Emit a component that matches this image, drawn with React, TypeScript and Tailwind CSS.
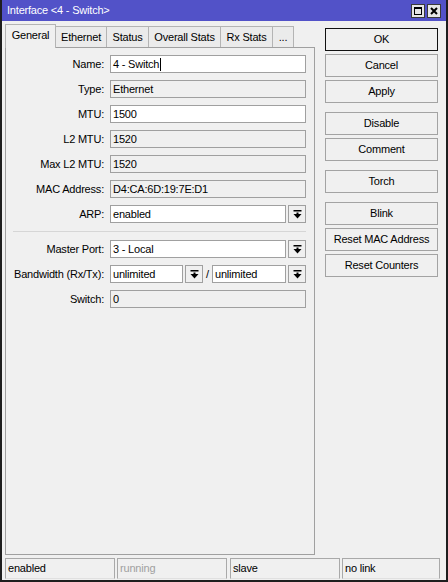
import React from "react";

const tabs = [
  { label: "General", w: "w-[51px]", active: true },
  { label: "Ethernet", w: "w-[52px]" },
  { label: "Status", w: "w-[43px]" },
  { label: "Overall Stats", w: "w-[73px]" },
  { label: "Rx Stats", w: "w-[53px]" },
  { label: "...", w: "w-[22px]" },
];

const buttonGroups = [
  ["OK", "Cancel", "Apply"],
  ["Disable", "Comment"],
  ["Torch"],
  ["Blink", "Reset MAC Address", "Reset Counters"],
];

const statusCells = [
  { text: "enabled", w: "w-[110px]", gap: "" },
  { text: "running", w: "w-[110px]", gap: "ml-[2px]", dim: true },
  { text: "slave", w: "w-[110px]", gap: "ml-[3px]" },
  { text: "no link", w: "w-[98px]", gap: "ml-[2px]" },
];

function DropIcon() {
  return (
    <svg width="9" height="9" viewBox="0 0 9 9">
      <rect x="0.5" y="0" width="8" height="1.5" fill="#000" />
      <rect x="3.5" y="2.5" width="2" height="1.5" fill="#000" />
      <polygon points="0.5,4 8.5,4 4.5,8.5" fill="#000" />
    </svg>
  );
}

function DropBtn() {
  return (
    <div className="w-[18px] h-[18px] shrink-0 border border-[#a0a0a0] bg-[#f0f0f0] flex items-center justify-center">
      <DropIcon />
    </div>
  );
}

function Field({
  value,
  editable,
  caret,
  className = "w-full",
}: {
  value: string;
  editable?: boolean;
  caret?: boolean;
  className?: string;
}) {
  return (
    <div
      className={`h-[18px] border border-[#a0a0a0] flex items-center px-[2px] text-black whitespace-nowrap overflow-hidden ${
        editable ? "bg-white" : "bg-[#f0f0f0]"
      } ${className}`}
    >
      {value}
      {caret && <span className="w-px h-[13px] bg-black ml-px" />}
    </div>
  );
}

function Row({ label, children }: { label: string; children: React.ReactNode }) {
  return (
    <div className="flex items-center h-[18px]">
      <div className="w-[98px] text-right text-black whitespace-nowrap">{label}</div>
      <div className="ml-[6px] w-[196px] flex items-center">{children}</div>
    </div>
  );
}

export default function App() {
  return (
    <div className="w-[448px] h-[582px] bg-[#f0f0f0] border-l-2 border-r-2 border-b-2 border-[#1e1e1e] flex flex-col font-['Liberation_Sans',Arial,sans-serif] text-[11px] tracking-[-0.2px] select-none">
      {/* Title bar */}
      <div className="h-[21px] shrink-0 bg-[#5252c8] flex items-center pl-[5px] pr-[5px]">
        <span className="text-white">Interface &lt;4 - Switch&gt;</span>
        <div className="ml-auto flex gap-[2px]">
          <div className="w-[14px] h-[14px] bg-[#e6e6e6] border border-[#3a3a3a] flex items-center justify-center">
            <svg width="8" height="8" viewBox="0 0 8 8">
              <rect x="0.5" y="0.5" width="7" height="7" fill="none" stroke="#000" />
              <rect x="0" y="0" width="8" height="2" fill="#000" />
            </svg>
          </div>
          <div className="w-[14px] h-[14px] bg-[#e6e6e6] border border-[#3a3a3a] flex items-center justify-center">
            <svg width="8" height="8" viewBox="0 0 8 8">
              <path d="M1 1 L7 7 M7 1 L1 7" stroke="#000" strokeWidth="2" />
            </svg>
          </div>
        </div>
      </div>

      {/* Body */}
      <div className="flex flex-1 min-h-0">
        {/* Tabs + panel */}
        <div className="ml-[3px] w-[310px] flex flex-col">
          <div className="h-[23px] mt-[3px] flex items-end">
            {tabs.map((t, i) => (
              <div
                key={t.label}
                className={`${t.w} ${i > 0 ? "-ml-px" : ""} flex items-center justify-center border-t border-l border-r border-[#b4b4b4] text-black whitespace-nowrap ${
                  t.active
                    ? "h-[24px] -mb-px relative z-10 bg-[#f0f0f0] border-[#a0a0a0] pb-[2px]"
                    : "h-[21px] bg-[#ebebeb]"
                }`}
              >
                {t.label}
              </div>
            ))}
          </div>
          <div className="flex-1 border border-[#a0a0a0] bg-[#f0f0f0] pt-[7px] flex flex-col gap-[7px]">
            <Row label="Name:">
              <Field value="4 - Switch" editable caret />
            </Row>
            <Row label="Type:">
              <Field value="Ethernet" />
            </Row>
            <Row label="MTU:">
              <Field value="1500" editable />
            </Row>
            <Row label="L2 MTU:">
              <Field value="1520" />
            </Row>
            <Row label="Max L2 MTU:">
              <Field value="1520" />
            </Row>
            <Row label="MAC Address:">
              <Field value="D4:CA:6D:19:7E:D1" />
            </Row>
            <Row label="ARP:">
              <Field value="enabled" editable className="flex-1" />
              <div className="ml-[2px]">
                <DropBtn />
              </div>
            </Row>
            <div className="my-px ml-[7px] mr-[8px] h-px bg-[#d6d6d6]" />
            <Row label="Master Port:">
              <Field value="3 - Local" editable className="flex-1" />
              <div className="ml-[2px]">
                <DropBtn />
              </div>
            </Row>
            <Row label="Bandwidth (Rx/Tx):">
              <Field value="unlimited" editable className="w-[73px]" />
              <div className="ml-[2px]">
                <DropBtn />
              </div>
              <span className="w-[9px] text-center text-black">/</span>
              <Field value="unlimited" editable className="w-[74px]" />
              <div className="ml-[2px]">
                <DropBtn />
              </div>
            </Row>
            <Row label="Switch:">
              <Field value="0" />
            </Row>
          </div>
        </div>

        {/* Buttons */}
        <div className="ml-[10px] w-[113px] pt-[7px] flex flex-col">
          {buttonGroups.map((group, gi) => (
            <div key={gi} className={`flex flex-col gap-[3px] ${gi > 0 ? "mt-[9px]" : ""}`}>
              {group.map((b) => (
                <div
                  key={b}
                  className={`h-[23px] flex items-center justify-center bg-[#f0f0f0] text-black border ${
                    b === "OK" ? "border-[#111]" : "border-[#a3a3a3]"
                  }`}
                >
                  {b}
                </div>
              ))}
            </div>
          ))}
        </div>
      </div>

      {/* Status bar */}
      <div className="h-[22px] mt-[3px] ml-[3px] flex shrink-0">
        {statusCells.map((c) => (
          <div
            key={c.text}
            className={`${c.w} ${c.gap} h-[21px] border border-[#a9a9a9] border-b-[#e0e0e0] flex items-center pl-[2px] ${
              c.dim ? "text-[#a0a0a0]" : "text-black"
            }`}
          >
            {c.text}
          </div>
        ))}
      </div>
    </div>
  );
}
